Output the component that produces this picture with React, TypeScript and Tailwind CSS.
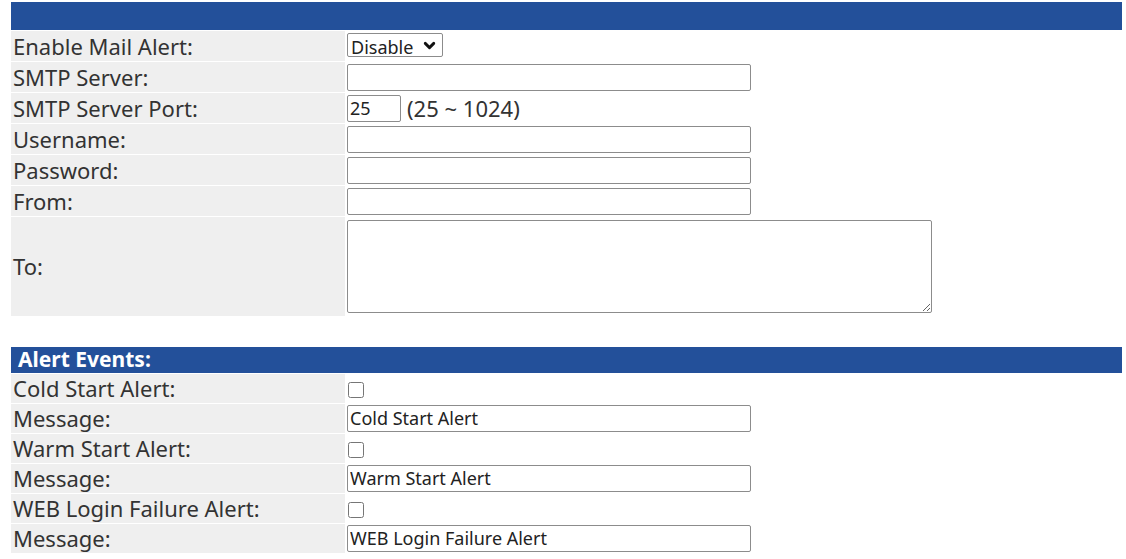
import { ChevronDown } from 'lucide-react'

const font = { fontFamily: '"Noto Sans", "Open Sans", sans-serif' }

function Label({ text }: { text: string }) {
  return (
    <div className="w-[334px] shrink-0 h-full bg-[#efefef] pl-[2px] flex items-center text-[22px] text-[#333]">
      {text}
    </div>
  )
}

function TextBox({ value = '', width = 'w-[404px]' }: { value?: string; width?: string }) {
  return (
    <input
      defaultValue={value}
      className={`${width} h-[27px] border border-[#8c8c8c] rounded-[2px] bg-white px-[2px] text-[18px] text-[#222] outline-none`}
      style={font}
    />
  )
}

function Row({ label, h = 'h-[30px]', children }: { label: string; h?: string; children?: React.ReactNode }) {
  return (
    <div className={`flex ${h}`}>
      <Label text={label} />
      <div className="flex-1 flex items-center pl-[2px]">{children}</div>
    </div>
  )
}

function Check() {
  return <input type="checkbox" className="w-[16px] h-[16px] m-0 ml-[1px] mt-[2px]" />
}

export default function App() {
  return (
    <div className="w-[1126px] h-[559px] bg-white overflow-hidden pt-[2px] pl-[11px] pr-[4px]" style={font}>
      <div className="h-[28px] bg-[#23509a]" />
      <div className="flex flex-col gap-[1px] pt-[1px]">
        <Row label="Enable Mail Alert:">
          <div className="relative">
            <select
              defaultValue="Disable"
              className="appearance-none w-[96px] h-[24px] border border-[#8c8c8c] rounded-[2px] bg-white pl-[3px] text-[18px] text-[#222] outline-none"
              style={font}
            >
              <option>Disable</option>
              <option>Enable</option>
            </select>
            <ChevronDown size={17} strokeWidth={4} className="absolute right-[5px] top-[4px] text-[#111] pointer-events-none" />
          </div>
        </Row>
        <Row label="SMTP Server:"><TextBox /></Row>
        <Row label="SMTP Server Port:">
          <TextBox value="25" width="w-[54px]" />
          <span className="ml-[6px] text-[22px] text-[#333]">(25 ~ 1024)</span>
        </Row>
        <Row label="Username:"><TextBox /></Row>
        <Row label="Password:"><TextBox /></Row>
        <Row label="From:"><TextBox /></Row>
        <Row label="To:" h="h-[99px]">
          <textarea className="w-[585px] h-[93px] border border-[#8c8c8c] rounded-[2px] bg-white outline-none" />
        </Row>
      </div>

      <div className="mt-[31px] h-[26px] bg-[#23509a] pl-[7px] flex items-center text-[21px] font-bold text-white">
        Alert Events:
      </div>
      <div className="flex flex-col gap-[1px] pt-[1px]">
        <Row label="Cold Start Alert:" h="h-[29px]"><Check /></Row>
        <Row label="Message:" h="h-[29px]"><TextBox value="Cold Start Alert" /></Row>
        <Row label="Warm Start Alert:" h="h-[29px]"><Check /></Row>
        <Row label="Message:" h="h-[29px]"><TextBox value="Warm Start Alert" /></Row>
        <Row label="WEB Login Failure Alert:" h="h-[29px]"><Check /></Row>
        <Row label="Message:" h="h-[29px]"><TextBox value="WEB Login Failure Alert" /></Row>
      </div>
    </div>
  )
}
